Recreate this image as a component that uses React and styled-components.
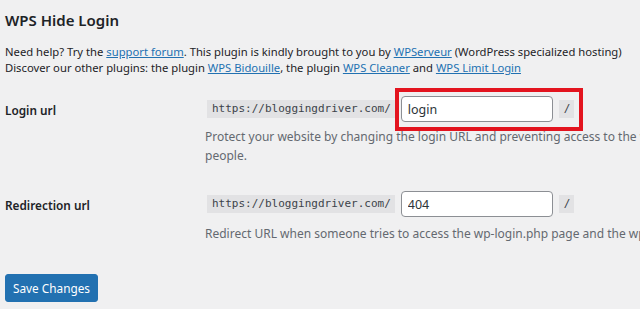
import React from "react";
import styled, { createGlobalStyle } from "styled-components";

const Global = createGlobalStyle`
  html, body { margin: 0; padding: 0; background: #f0f0f1; overflow: hidden; }
  body { width: 640px; height: 309px; }
`;

const Page = styled.div`
  padding: 11px 0 0 5px;
  font-family: "Noto Sans", "Open Sans", sans-serif;
  font-size: 12px;
  color: #1d2327;
  width: 900px;
`;

const Title = styled.h2`
  margin: 0;
  font-size: 15px;
  font-weight: 600;
  line-height: 18px;
  color: #1d2327;
`;

const Intro = styled.p`
  margin: 15px 0 0;
  font-size: 11.25px;
  line-height: 16px;
  white-space: nowrap;
`;

const Link = styled.a`
  color: #2271b1;
  text-decoration: underline;
`;

const Table = styled.div`
  display: grid;
  grid-template-columns: 200px 1fr;
  margin-top: 20px;
  row-gap: 26px;
`;

const Label = styled.div`
  font-weight: 600;
  font-size: 11.8px;
  padding-top: ${(p) => p.$pt}px;
`;

const Field = styled.div`
  display: flex;
  flex-direction: column;
`;

const InputRow = styled.div`
  display: flex;
  align-items: center;
  gap: 6px;
  padding-left: 2px;
`;

const Code = styled.code`
  font-family: "DejaVu Sans Mono", "Liberation Mono", monospace;
  font-size: 11px;
  background: #e2e2e4;
  color: #3c434a;
  padding: 0 4px 0 5px;
  height: 18px;
  line-height: 18px;
  display: inline-block;
`;

const InputWrap = styled.div`
  position: relative;
  display: flex;
`;

const Input = styled.input`
  width: 152px;
  height: 26px;
  box-sizing: border-box;
  border: 1px solid #8c8f94;
  border-radius: 4px;
  background: #fff;
  padding: 0 6px;
  font-family: "Noto Sans", sans-serif;
  font-size: 12.5px;
  color: #2c3338;
  outline: none;
`;

const Highlight = styled.div`
  position: absolute;
  left: -6px;
  top: -8px;
  width: 188px;
  height: 43px;
  box-sizing: border-box;
  border: 4px solid #e3141f;
  pointer-events: none;
`;

const Desc = styled.p`
  margin: ${(p) => p.$mt}px 0 0;
  color: #646970;
  line-height: 19px;
  white-space: nowrap;
`;

const Button = styled.button`
  margin-top: 31px;
  background: #2271b1;
  color: #fff;
  border: 1px solid #2271b1;
  border-radius: 3px;
  height: 28px;
  width: 93px;
  padding: 0;
  font-family: "Noto Sans", sans-serif;
  font-size: 11.8px;
  cursor: pointer;
`;

export default function App() {
  return (
    <>
      <Global />
      <Page>
        <Title>WPS Hide Login</Title>
        <Intro>
          Need help? Try the <Link href="#">support forum</Link>. This plugin is kindly brought to you by{" "}
          <Link href="#">WPServeur</Link> (WordPress specialized hosting)
          <br />
          Discover our other plugins: the plugin <Link href="#">WPS Bidouille</Link>, the plugin{" "}
          <Link href="#">WPS Cleaner</Link> and <Link href="#">WPS Limit Login</Link>
        </Intro>
        <Table>
          <Label $pt={6}>Login url</Label>
          <Field>
            <InputRow>
              <Code>https://bloggingdriver.com/</Code>
              <InputWrap>
                <Input defaultValue="login" />
                <Highlight />
              </InputWrap>
              <Code>/</Code>
            </InputRow>
            <Desc $mt={5}>
              Protect your website by changing the login URL and preventing access to the wp-login.php page and the wp-admin directory to non-connected
              <br />
              people.
            </Desc>
          </Field>
          <Label $pt={6}>Redirection url</Label>
          <Field>
            <InputRow>
              <Code>https://bloggingdriver.com/</Code>
              <InputWrap>
                <Input defaultValue="404" />
              </InputWrap>
              <Code>/</Code>
            </InputRow>
            <Desc $mt={7}>
              Redirect URL when someone tries to access the wp-login.php page and the wp-admin directory while not logged in.
            </Desc>
          </Field>
        </Table>
        <Button>Save Changes</Button>
      </Page>
    </>
  );
}
